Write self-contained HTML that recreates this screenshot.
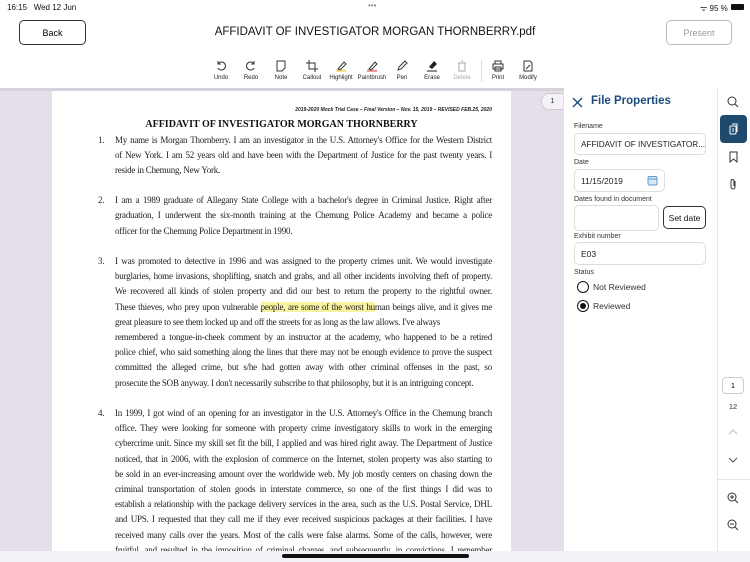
<!DOCTYPE html><html><head><meta charset="utf-8"><style>
*{margin:0;padding:0;box-sizing:border-box}
body{width:750px;height:562px;overflow:hidden;background:#fff;font-family:"Liberation Sans",sans-serif;position:relative}
.a{position:absolute}
.st{font-size:8px;color:#111}
.btn{position:absolute;border:1px solid #333;border-radius:5px;font-size:9px;display:flex;align-items:center;justify-content:center}
.tool{position:absolute;top:60px;width:34px;text-align:center;font-size:6px;color:#222}
.tool svg{display:block;margin:0 auto 3px}
.doc{position:absolute;left:52px;top:91px;width:459px;height:460px;background:#fff;overflow:hidden}
.l{position:absolute;left:63px;width:377px;font-family:"Liberation Serif",serif;font-size:9px;letter-spacing:-0.22px;color:#222;white-space:nowrap;text-align:justify;text-align-last:justify}
.l.e{text-align-last:left}
.n{position:absolute;left:46px;font-family:"Liberation Serif",serif;font-size:9px;color:#222}
.lab{position:absolute;left:574px;font-size:7px;color:#333}
.inp{position:absolute;border:1px solid #ddd;border-radius:5px;font-size:8.5px;color:#222;padding-left:6px;display:flex;align-items:center;white-space:nowrap;overflow:hidden}
</style></head><body>
<div class="a st" style="left:7px;top:3px">16:15&nbsp;&nbsp; Wed 12 Jun</div>
<div class="a" style="left:368px;top:1px;font-size:8px;color:#888">•••</div>
<div class="a st" style="left:700px;top:3px">ᯤ 95 %</div>
<div class="a" style="left:731px;top:4px;width:13px;height:6px;background:#111;border-radius:1px"></div>
<div class="btn" style="left:19px;top:20px;width:67px;height:25px">Back</div>
<div class="a" style="left:0;width:750px;top:26px;text-align:center;font-size:11.5px;color:#111">AFFIDAVIT OF INVESTIGATOR MORGAN THORNBERRY.pdf</div>
<div class="btn" style="left:666px;top:20px;width:66px;height:25px;border-color:#bbb;color:#999">Present</div>

<div class="tool" style="left:204px"><svg width="12" height="12" viewBox="0 0 12 12" fill="none" stroke="#333"><path d="M3 4a4 4 0 1 1 0 4M3 1v3h3"/></svg>Undo</div>
<div class="tool" style="left:234px"><svg width="12" height="12" viewBox="0 0 12 12" fill="none" stroke="#333"><path d="M9 4a4 4 0 1 0 0 4M9 1v3H6"/></svg>Redo</div>
<div class="tool" style="left:264px"><svg width="12" height="12" viewBox="0 0 12 12" fill="none" stroke="#333"><path d="M2 1h8v7l-3 3H2z"/></svg>Note</div>
<div class="tool" style="left:295px"><svg width="12" height="12" viewBox="0 0 12 12" fill="none" stroke="#333"><path d="M3 0v9h9M0 3h9v9"/></svg>Callout</div>
<div class="tool" style="left:324px"><svg width="12" height="12" viewBox="0 0 12 12"><path d="M1 11h10" stroke="#f5df8a" stroke-width="3"/><path d="M3 9l6-7 2 2-6 6z" fill="none" stroke="#333"/></svg>Highlight</div>
<div class="tool" style="left:355px"><svg width="12" height="12" viewBox="0 0 12 12"><path d="M1 11h10" stroke="#e99" stroke-width="3"/><path d="M3 9l6-7 2 2-6 6z" fill="none" stroke="#333"/></svg>Paintbrush</div>
<div class="tool" style="left:385px"><svg width="12" height="12" viewBox="0 0 12 12" fill="none" stroke="#333"><path d="M2 10l1-3 6-6 2 2-6 6z"/></svg>Pen</div>
<div class="tool" style="left:415px"><svg width="12" height="12" viewBox="0 0 12 12"><path d="M3 7l5-6 3 3-5 5z" fill="#222"/><path d="M1 11h10" stroke="#222"/></svg>Erase</div>
<div class="tool" style="left:445px;color:#aaa"><svg width="12" height="12" viewBox="0 0 12 12" fill="none" stroke="#aaa"><path d="M2 3h8M3 3v8h6V3M5 1h2"/></svg>Delete</div>
<div class="a" style="left:481px;top:60px;width:1px;height:22px;background:#ddd"></div>
<div class="tool" style="left:481px"><svg width="12" height="12" viewBox="0 0 12 12" fill="none" stroke="#333"><path d="M3 4V1h6v3M1 4h10v5H1zM3 7h6v4H3z"/></svg>Print</div>
<div class="tool" style="left:511px"><svg width="12" height="12" viewBox="0 0 12 12" fill="none" stroke="#333"><path d="M2 1h6l2 2v8H2zM4 9l4-4"/></svg>Modify</div>

<div class="a" style="left:0;top:88px;width:564px;height:463px;background:#e5dfea"></div>
<div class="a" style="left:0;top:88px;width:564px;height:3px;background:#d6d1da"></div>
<div class="doc">
<div class="a" style="right:19px;top:16px;font-size:5px;font-style:italic;font-weight:bold;color:#222">2019-2020 Mock Trial Case – Final Version – Nov. 15, 2019 – REVISED FEB.25, 2020</div>
<div class="a" style="left:0;width:459px;top:28px;text-align:center;font-family:'Liberation Serif',serif;font-weight:bold;font-size:10px;color:#111">AFFIDAVIT OF INVESTIGATOR MORGAN THORNBERRY</div>
<div class="n" style="top:44px">1.</div>
<div class="l" style="top:44px">My name is Morgan Thornberry. I am an investigator in the U.S. Attorney's Office for the Western District</div>
<div class="l" style="top:59px">of New York. I am 52 years old and have been with the Department of Justice for the past twenty years. I</div>
<div class="l e" style="top:74px">reside in Chemung, New York.</div>
<div class="n" style="top:104px">2.</div>
<div class="l" style="top:104px">I am a 1989 graduate of Allegany State College with a bachelor's degree in Criminal Justice. Right after</div>
<div class="l" style="top:119px">graduation, I underwent the six-month training at the Chemung Police Academy and became a police</div>
<div class="l e" style="top:135px">officer for the Chemung Police Department in 1990.</div>
<div class="n" style="top:165px">3.</div>
<div class="l" style="top:165px">I was promoted to detective in 1996 and was assigned to the property crimes unit. We would investigate</div>
<div class="l" style="top:180px">burglaries, home invasions, shoplifting, snatch and grabs, and all other incidents involving theft of property.</div>
<div class="l" style="top:195px">We recovered all kinds of stolen property and did our best to return the property to the rightful owner.</div>
<div class="l" style="top:211px">These thieves, who prey upon vulnerable <span style="background:#f8f3a0">people, are some of the worst hu</span>man beings alive, and it gives me</div>
<div class="l e" style="top:226px">great pleasure to see them locked up and off the streets for as long as the law allows. I've always</div>
<div class="l" style="top:241px">remembered a tongue-in-cheek comment by an instructor at the academy, who happened to be a retired</div>
<div class="l" style="top:256px">police chief, who said something along the lines that there may not be enough evidence to prove the suspect</div>
<div class="l" style="top:271px">committed the alleged crime, but s/he had gotten away with other criminal offenses in the past, so</div>
<div class="l e" style="top:287px">prosecute the SOB anyway. I don't necessarily subscribe to that philosophy, but it is an intriguing concept.</div>
<div class="n" style="top:317px">4.</div>
<div class="l" style="top:317px">In 1999, I got wind of an opening for an investigator in the U.S. Attorney's Office in the Chemung branch</div>
<div class="l" style="top:332px">office. They were looking for someone with property crime investigatory skills to work in the emerging</div>
<div class="l" style="top:347px">cybercrime unit. Since my skill set fit the bill, I applied and was hired right away. The Department of Justice</div>
<div class="l" style="top:363px">noticed, that in 2006, with the explosion of commerce on the Internet, stolen property was also starting to</div>
<div class="l" style="top:378px">be sold in an ever-increasing amount over the worldwide web. My job mostly centers on chasing down the</div>
<div class="l" style="top:393px">criminal transportation of stolen goods in interstate commerce, so one of the first things I did was to</div>
<div class="l" style="top:408px">establish a relationship with the package delivery services in the area, such as the U.S. Postal Service, DHL</div>
<div class="l" style="top:423px">and UPS. I requested that they call me if they ever received suspicious packages at their facilities. I have</div>
<div class="l" style="top:439px">received many calls over the years. Most of the calls were false alarms. Some of the calls, however, were</div>
<div class="l" style="top:454px">fruitful, and resulted in the imposition of criminal charges, and subsequently, in convictions. I remember</div>
</div>
<div class="a" style="left:541px;top:93px;width:22px;height:17px;border:1px solid #ccc;border-right:none;border-radius:8px 0 0 8px;background:#f4f2f6;font-size:7px;text-align:center;line-height:15px;color:#333">1</div>

<div class="a" style="left:564px;top:88px;width:153px;height:463px;background:#fff"></div>
<div class="a" style="left:717px;top:88px;width:1px;height:463px;background:#e5e5e5"></div>
<svg class="a" style="left:572px;top:97px" width="11" height="11" viewBox="0 0 11 11"><path d="M1 1l9 9M10 1l-9 9" stroke="#1e4a7a" stroke-width="1.4"/></svg>
<div class="a" style="left:591px;top:95px;font-size:11.5px;font-weight:bold;color:#1e4a7a">File Properties</div>
<div class="lab" style="top:123px">Filename</div>
<div class="inp" style="left:574px;top:133px;width:132px;height:22px;font-size:8.2px">AFFIDAVIT OF INVESTIGATOR...</div>
<div class="lab" style="top:159px">Date</div>
<div class="inp" style="left:574px;top:169px;width:91px;height:23px">11/15/2019</div>
<svg class="a" style="left:647px;top:175px" width="11" height="11" viewBox="0 0 11 11"><rect x="1" y="1.5" width="9" height="8.5" rx="1.5" fill="#d7e9f7" stroke="#5a9ad0"/><path d="M1 4h9" stroke="#5a9ad0"/></svg>
<div class="lab" style="top:196px">Dates found in document</div>
<div class="inp" style="left:574px;top:205px;width:85px;height:26px"></div>
<div class="btn" style="left:663px;top:206px;width:43px;height:23px;font-size:8.5px;color:#111">Set date</div>
<div class="lab" style="top:233px">Exhibit number</div>
<div class="inp" style="left:574px;top:242px;width:132px;height:23px">E03</div>
<div class="lab" style="top:269px">Status</div>
<div class="a" style="left:577px;top:281px;width:12px;height:12px;border:1.3px solid #111;border-radius:50%"></div>
<div class="a" style="left:593px;top:282px;font-size:8.5px;color:#333">Not Reviewed</div>
<div class="a" style="left:577px;top:300px;width:12px;height:12px;border:1.3px solid #111;border-radius:50%"></div>
<div class="a" style="left:580px;top:303px;width:6px;height:6px;background:#111;border-radius:50%"></div>
<div class="a" style="left:593px;top:301px;font-size:8.5px;color:#333">Reviewed</div>

<svg class="a" style="left:727px;top:96px" width="12" height="12" viewBox="0 0 12 12" fill="none" stroke="#333"><circle cx="5" cy="5" r="4"/><path d="M8 8l3 3"/></svg>
<div class="a" style="left:720px;top:115px;width:27px;height:28px;background:#1e4a6e;border-radius:4px"></div>
<svg class="a" style="left:728px;top:123px" width="11" height="12" viewBox="0 0 11 12" fill="none" stroke="#fff"><rect x="2" y="3" width="6" height="8" rx="1"/><path d="M4 1h5v8M4 6h2M4 8h2"/></svg>
<svg class="a" style="left:729px;top:151px" width="9" height="12" viewBox="0 0 9 12" fill="none" stroke="#333"><path d="M1 1h7v10L4.5 8 1 11z"/></svg>
<svg class="a" style="left:729px;top:178px" width="9" height="12" viewBox="0 0 9 12" fill="none" stroke="#333"><path d="M6 3v6a2 2 0 0 1-4 0V3a1.5 1.5 0 0 1 3 0v5"/></svg>
<div class="a" style="left:722px;top:377px;width:22px;height:17px;border:1px solid #ccc;border-radius:4px;font-size:7.5px;text-align:center;line-height:15px">1</div>
<div class="a" style="left:722px;top:402px;width:22px;font-size:7.5px;text-align:center;color:#333">12</div>
<svg class="a" style="left:728px;top:429px" width="10" height="6" viewBox="0 0 10 6" fill="none" stroke="#bbb"><path d="M1 5l4-4 4 4"/></svg>
<svg class="a" style="left:728px;top:457px" width="10" height="6" viewBox="0 0 10 6" fill="none" stroke="#555"><path d="M1 1l4 4 4-4"/></svg>
<div class="a" style="left:718px;top:479px;width:32px;height:1px;background:#e5e5e5"></div>
<svg class="a" style="left:727px;top:492px" width="12" height="12" viewBox="0 0 12 12" fill="none" stroke="#333"><circle cx="5" cy="5" r="4"/><path d="M8 8l3 3M3 5h4M5 3v4"/></svg>
<svg class="a" style="left:727px;top:519px" width="12" height="12" viewBox="0 0 12 12" fill="none" stroke="#333"><circle cx="5" cy="5" r="4"/><path d="M8 8l3 3M3 5h4"/></svg>
<div class="a" style="left:0;top:551px;width:750px;height:11px;background:#f2f2f7"></div>
<div class="a" style="left:282px;top:554px;width:187px;height:4px;background:#111;border-radius:2px"></div>
</body></html>
